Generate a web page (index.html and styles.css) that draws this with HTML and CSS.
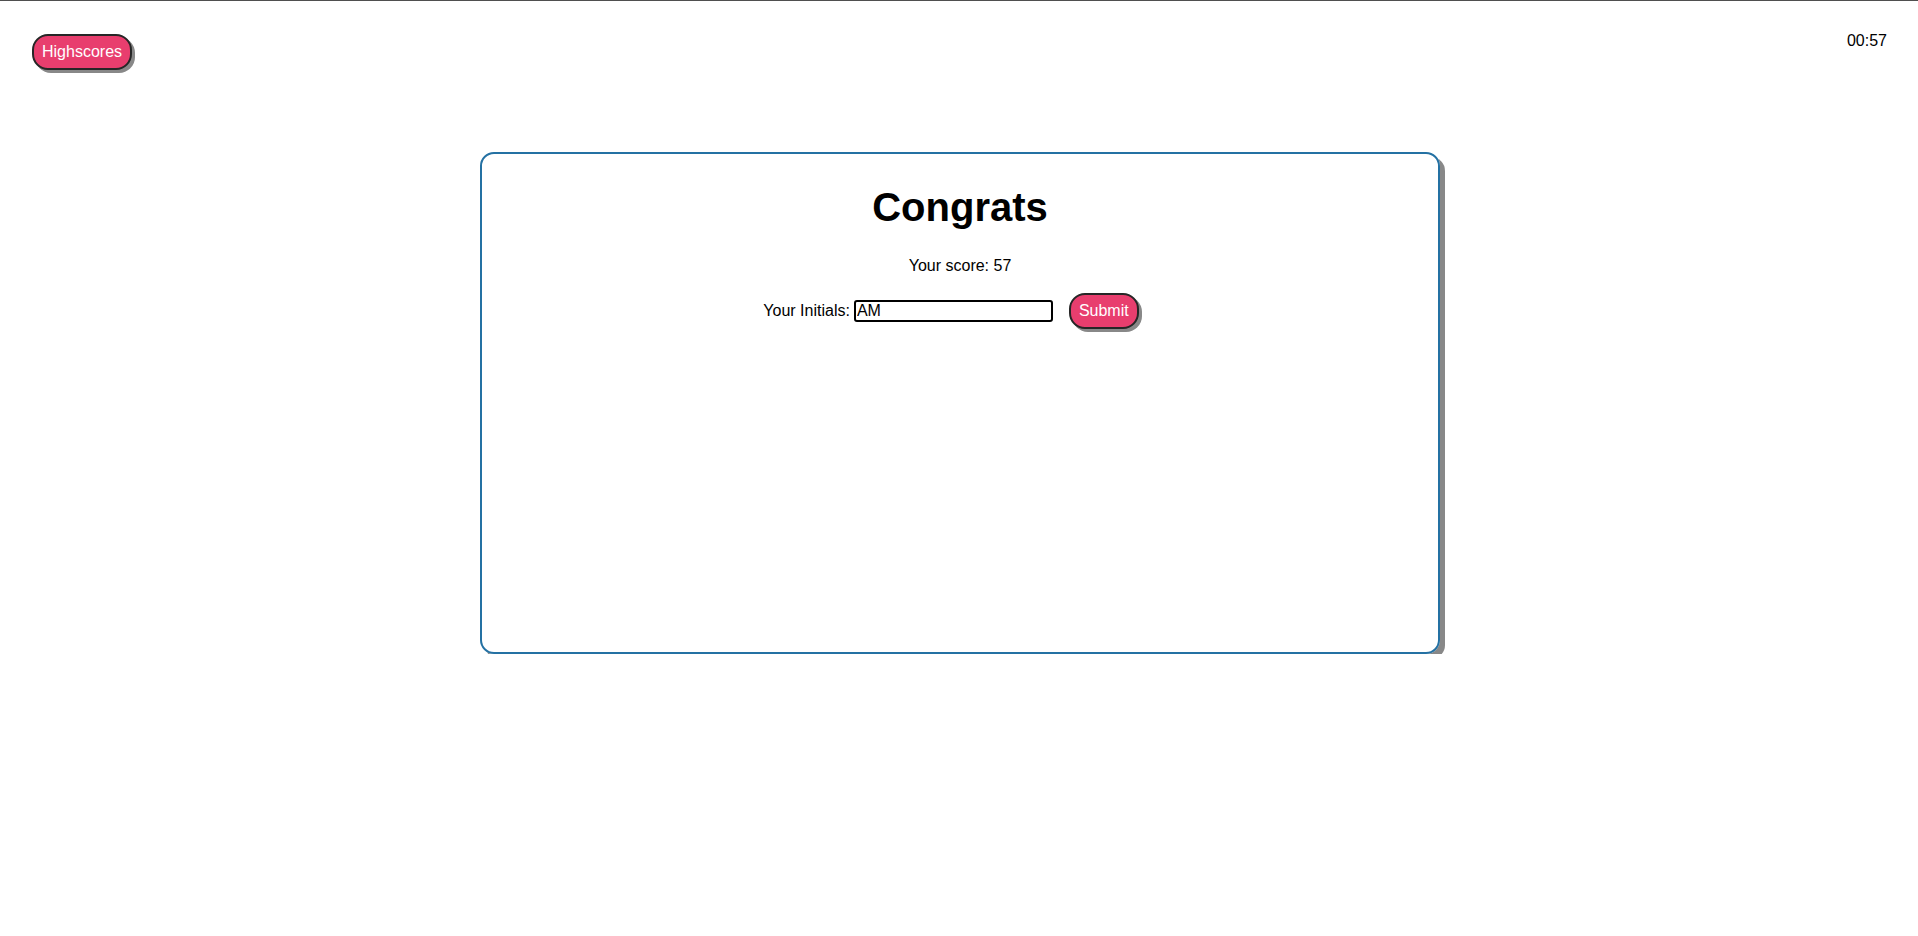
FILE: index.html
```html
<!DOCTYPE html>
<html lang="en">
<head>
<meta charset="utf-8">
<title>Quiz</title>
<link rel="stylesheet" href="styles.css">
</head>
<body>
<header class="topbar">
  <button class="btn btn-high">Highscores</button>
  <div class="timer">00:57</div>
</header>
<main class="stage">
  <section class="card">
    <h1 class="title">Congrats</h1>
    <p class="score">Your score: 57</p>
    <div class="initials-row">
      <label class="initials-label" for="initials">Your Initials:</label>
      <input class="initials-input" id="initials" type="text" value="AM">
      <button class="btn btn-submit">Submit</button>
    </div>
  </section>
</main>
<script src="script.js"></script>
</body>
</html>
```

FILE: styles.css
```css
html, body {
  margin: 0;
  padding: 0;
}
body {
  border-top: 1px solid #4f4f4f;
  font-family: "Liberation Sans", Arial, sans-serif;
  font-size: 16px;
  color: #000;
  background: #fff;
}
.topbar {
  display: flex;
  justify-content: space-between;
  align-items: flex-start;
  padding: 29px 31px 0 32px;
}
.btn {
  font-family: "Liberation Sans", Arial, sans-serif;
  font-size: 16px;
  line-height: 18px;
  color: #fff;
  background: #e83e6e;
  border: 2px solid #262626;
  border-radius: 16px;
  box-shadow: 3px 3px 0 #888;
  padding: 7px 8px;
  cursor: pointer;
}
.btn-high {
  margin-top: 4px;
}
.timer {
  line-height: 18px;
  margin-top: 2px;
}
.stage {
  display: flex;
  justify-content: center;
  padding-left: 2px;
  margin-top: 82px;
}
.card {
  box-sizing: border-box;
  width: 960px;
  height: 502px;
  border: 2px solid #2471a3;
  border-radius: 14px;
  box-shadow: 5px 5px 0 #888;
  padding: 4px 20px;
  text-align: center;
}
.title {
  font-size: 40px;
  font-weight: bold;
  margin: 26px 0 27px;
  line-height: 46px;
}
.score {
  margin: 0 0 18px;
  line-height: 18px;
}
.initials-row {
  display: flex;
  justify-content: center;
  align-items: center;
  padding-right: 18px;
}
.initials-label {
  margin-right: 4px;
}
.initials-input {
  box-sizing: border-box;
  width: 199px;
  height: 22px;
  border: 2px solid #000;
  border-radius: 3px;
  padding: 0 1px;
  font-family: "Liberation Sans", Arial, sans-serif;
  font-size: 16px;
  color: #000;
  outline: none;
}
.btn-submit {
  margin-left: 16px;
}
```

FILE: script.js
```js
var el = document.getElementById('initials');
el.focus();
el.setSelectionRange(2, 2);
```
